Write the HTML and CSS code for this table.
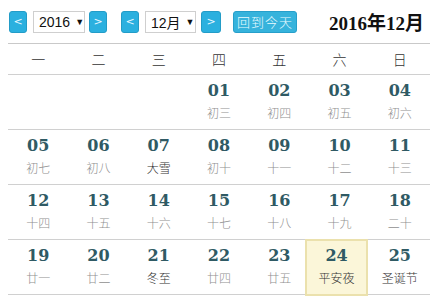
FILE: index.html
```html
<!DOCTYPE html>
<html lang="zh">
<head>
<meta charset="utf-8">
<link rel="stylesheet" href="styles.css">
</head>
<body>
<div class="cal">
  <div class="bar">
    <span class="btn b1">&lt;</span>
    <span class="sel s1">2016<i class="arr">▼</i></span>
    <span class="btn b2">&gt;</span>
    <span class="btn b3">&lt;</span>
    <span class="sel s2">12月<i class="arr">▼</i></span>
    <span class="btn b4">&gt;</span>
    <span class="today-btn">回到今天</span>
    <span class="title">2016年12月</span>
  </div>
  <div class="week">
    <span>一</span><span>二</span><span>三</span><span>四</span><span>五</span><span>六</span><span>日</span>
  </div>
  <div class="row">
    <div class="cell"></div><div class="cell"></div><div class="cell"></div>
    <div class="cell"><b>01</b><s>初三</s></div>
    <div class="cell"><b>02</b><s>初四</s></div>
    <div class="cell"><b>03</b><s>初五</s></div>
    <div class="cell"><b>04</b><s>初六</s></div>
  </div>
  <div class="row">
    <div class="cell"><b>05</b><s>初七</s></div>
    <div class="cell"><b>06</b><s>初八</s></div>
    <div class="cell"><b>07</b><s class="term">大雪</s></div>
    <div class="cell"><b>08</b><s>初十</s></div>
    <div class="cell"><b>09</b><s>十一</s></div>
    <div class="cell"><b>10</b><s>十二</s></div>
    <div class="cell"><b>11</b><s>十三</s></div>
  </div>
  <div class="row">
    <div class="cell"><b>12</b><s>十四</s></div>
    <div class="cell"><b>13</b><s>十五</s></div>
    <div class="cell"><b>14</b><s>十六</s></div>
    <div class="cell"><b>15</b><s>十七</s></div>
    <div class="cell"><b>16</b><s>十八</s></div>
    <div class="cell"><b>17</b><s>十九</s></div>
    <div class="cell"><b>18</b><s>二十</s></div>
  </div>
  <div class="row">
    <div class="cell"><b>19</b><s>廿一</s></div>
    <div class="cell"><b>20</b><s>廿二</s></div>
    <div class="cell"><b>21</b><s class="term">冬至</s></div>
    <div class="cell"><b>22</b><s>廿四</s></div>
    <div class="cell"><b>23</b><s>廿五</s></div>
    <div class="cell is-today"><b>24</b><s class="term">平安夜</s></div>
    <div class="cell"><b>25</b><s class="term">圣诞节</s></div>
  </div>
</div>
</body>
</html>
```
FILE: styles.css
```css
html, body {
  margin: 0;
  padding: 0;
  background: #fff;
}
body {
  width: 430px;
  height: 300px;
  overflow: hidden;
  font-family: "Liberation Sans", "Noto Sans CJK SC", sans-serif;
}
.cal {
  padding-left: 8px;
}
.bar {
  display: flex;
  align-items: center;
  box-sizing: border-box;
  height: 44px;
  padding-top: 11px;
  padding-bottom: 11px;
  border-bottom: 1px solid #c9c9c9;
}
.btn {
  display: flex;
  align-items: center;
  justify-content: center;
  width: 18px;
  height: 22px;
  box-sizing: border-box;
  background: #2bb0df;
  border: 1px solid #239cc7;
  border-radius: 3px;
  color: #e8f7ff;
  font-size: 11px;
  font-family: "DejaVu Sans", sans-serif;
}
.b1 { margin-left: 1px; }
.b2 { margin-left: 4px; }
.b3 { margin-left: 14px; }
.b4 { margin-left: 5px; width: 20px; }
.sel {
  display: flex;
  align-items: center;
  height: 22px;
  box-sizing: border-box;
  border: 1px solid #cfcfcf;
  background: #fff;
  color: #111;
  font-size: 14px;
  padding-left: 5px;
  margin-left: 6px;
}
.s1 { width: 52px; }
.s2 { width: 51px; }
.arr {
  font-style: normal;
  font-size: 9px;
  margin-left: 5px;
}
.today-btn {
  display: flex;
  align-items: center;
  justify-content: center;
  margin-left: 12px;
  width: 64px;
  height: 22px;
  box-sizing: border-box;
  background: #36b3dc;
  border: 1px solid #279fca;
  border-radius: 3px;
  color: #e9fbff;
  font-size: 13px;
  letter-spacing: 1px;
  font-family: "Noto Sans CJK SC", sans-serif;
  font-weight: 300;
}
.title {
  margin-left: 32px;
  font-family: "Liberation Serif", "Noto Sans CJK SC", serif;
  font-weight: bold;
  font-size: 19px;
  color: #111;
  white-space: nowrap;
}
.week {
  display: grid;
  grid-template-columns: repeat(7, 1fr);
  height: 30px;
  align-items: center;
  border-bottom: 1px solid #d0d0d0;
  font-family: "Noto Sans CJK SC", sans-serif;
  font-weight: 300;
  font-size: 14px;
  color: #333;
  text-align: center;
}
.row {
  display: grid;
  grid-template-columns: repeat(7, 1fr);
  height: 54px;
  border-bottom: 1px solid #d0d0d0;
}
.cell {
  display: flex;
  flex-direction: column;
  align-items: center;
  padding-top: 6px;
}
.cell b {
  font-family: "DejaVu Serif", serif;
  font-weight: bold;
  font-size: 16px;
  line-height: 20px;
  color: #2f5a64;
}
.cell s {
  text-decoration: none;
  font-family: "Noto Sans CJK SC", sans-serif;
  font-weight: 300;
  font-size: 12px;
  line-height: 20px;
  color: #909090;
  margin-top: 2px;
}
.cell s.term {
  color: #333;
}
.is-today {
  background: #fbf6d9;
  border: 2px solid #ebe1ad;
  margin: -1px 2px -2px -4px;
  padding-top: 5px;
}
```
